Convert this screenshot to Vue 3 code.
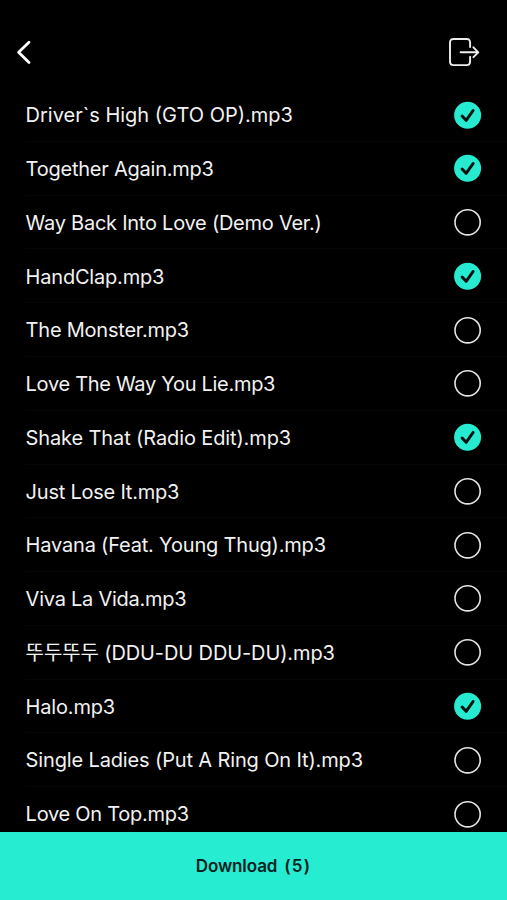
<template>
  <main class="screen">
    <header class="topbar">
      <button type="button" class="icon-btn" aria-label="Back">
        <svg width="20" height="28" viewBox="0 0 20 28" fill="none">
          <path d="M15 4.2L4.6 14.2L15 24.6" class="back-line" />
        </svg>
      </button>
      <button type="button" class="icon-btn" aria-label="Export">
        <svg width="34" height="32" viewBox="0 0 34 32" fill="none">
          <path d="M23.1 11V6.6Q23.1 3 19.5 3H6.6Q3 3 3 6.6V25.5Q3 29.1 6.6 29.1H19.5Q23.1 29.1 23.1 25.5V20.8" class="export-line" />
          <path d="M13.6 16.3H31M26.4 11.3L31.3 16.3L26.4 21.2" class="export-line" />
        </svg>
      </button>
    </header>

    <ul class="songs">
      <li v-for="song in songs" :key="song.name" class="song" @click="toggle(song)">
        <span class="name" :style="{ letterSpacing: `${song.tracking}px` }">{{ song.name }}</span>
        <svg class="check" width="28" height="28" viewBox="0 0 28 28" fill="none">
          <template v-if="song.checked">
            <circle cx="13.6" cy="14.3" r="13.5" class="dot" />
            <path d="M8.1 15L12.1 19.3L19.1 9.5" class="tick" />
          </template>
          <circle v-else cx="13.6" cy="14.3" r="12.6" class="ring" />
        </svg>
      </li>
    </ul>

    <button type="button" class="download">
      <span>Download</span>
      <span class="count">({{ selectedCount }})</span>
    </button>
  </main>
</template>

<script setup>
import { computed, ref } from 'vue'

const songs = ref([
  { name: 'Driver`s High (GTO OP).mp3', tracking: 0, checked: true },
  { name: 'Together Again.mp3', tracking: -0.23, checked: true },
  { name: 'Way Back Into Love (Demo Ver.)', tracking: -0.25, checked: false },
  { name: 'HandClap.mp3', tracking: -0.2, checked: true },
  { name: 'The Monster.mp3', tracking: -0.22, checked: false },
  { name: 'Love The Way You Lie.mp3', tracking: -0.3, checked: false },
  { name: 'Shake That (Radio Edit).mp3', tracking: -0.12, checked: true },
  { name: 'Just Lose It.mp3', tracking: -0.23, checked: false },
  { name: 'Havana (Feat. Young Thug).mp3', tracking: -0.19, checked: false },
  { name: 'Viva La Vida.mp3', tracking: -0.25, checked: false },
  { name: '뚜두뚜두 (DDU-DU DDU-DU).mp3', tracking: -0.11, checked: false },
  { name: 'Halo.mp3', tracking: -0.18, checked: true },
  { name: 'Single Ladies (Put A Ring On It).mp3', tracking: -0.14, checked: false },
  { name: 'Love On Top.mp3', tracking: -0.27, checked: false }
])

const selectedCount = computed(() => songs.value.filter(song => song.checked).length)

function toggle(song) {
  song.checked = !song.checked
}
</script>

<style>
body {
  margin: 0;
  background: #000;
}
</style>

<style scoped>
.screen {
  display: flex;
  flex-direction: column;
  height: 100vh;
  overflow: hidden;
  background: #000;
  color: #f2f2f2;
  font-family: Inter, "Noto Sans CJK KR", sans-serif;
}

.topbar {
  display: flex;
  flex: none;
  align-items: center;
  justify-content: space-between;
  box-sizing: border-box;
  height: 88.2px;
  padding: 16px 26px 0 14px;
}

.icon-btn {
  display: flex;
  padding: 0;
  border: 0;
  background: none;
  cursor: pointer;
}

.back-line {
  stroke: #fff;
  stroke-width: 2.8;
  stroke-linecap: round;
  stroke-linejoin: round;
}

.export-line {
  stroke: #eee;
  stroke-width: 1.9;
  stroke-linecap: round;
  stroke-linejoin: round;
}

.songs {
  flex: 1;
  min-height: 0;
  margin: 0;
  padding: 0;
  overflow: hidden;
  list-style: none;
}

.song {
  display: flex;
  align-items: center;
  justify-content: space-between;
  box-sizing: border-box;
  height: 53.77px;
  margin-left: 25.6px;
  padding-right: 25px;
  border-bottom: 1px solid #060606;
  cursor: pointer;
}

.name {
  padding-top: 1.4px;
  font-size: 20px;
  line-height: 28px;
  white-space: nowrap;
}

.check {
  flex: none;
}

.dot {
  fill: #26ebd1;
}

.tick {
  stroke: #04110f;
  stroke-width: 3;
  stroke-linecap: round;
  stroke-linejoin: round;
}

.ring {
  stroke: #e4e4e4;
  stroke-width: 1.6;
}

.download {
  display: flex;
  flex: none;
  align-items: center;
  justify-content: center;
  gap: 7px;
  height: 68px;
  padding: 0;
  border: 0;
  background: #26ecd2;
  color: #04231f;
  font-family: inherit;
  font-size: 17px;
  font-weight: 600;
  letter-spacing: -0.1px;
  cursor: pointer;
}

.count {
  letter-spacing: 1.2px;
}
</style>
